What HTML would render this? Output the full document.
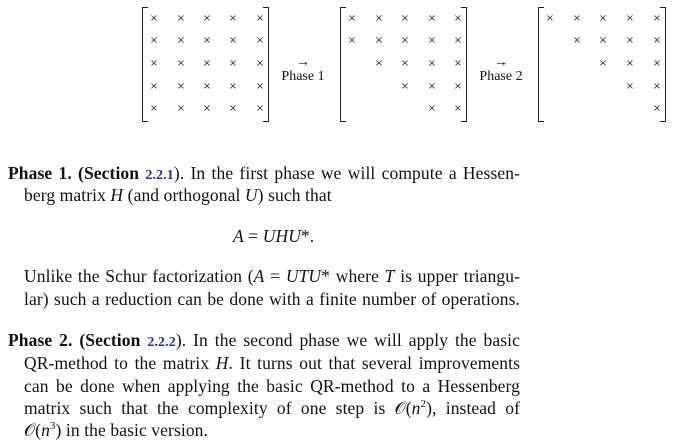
<!DOCTYPE html>
<html><head><meta charset="utf-8"><style>
body{margin:0;width:676px;height:445px;background:#fff;position:relative;overflow:hidden;font-family:"Liberation Serif",serif;color:#111}
.l{position:absolute;font-size:17.5px;line-height:20px;white-space:nowrap;letter-spacing:0.1px}
.j{text-align:justify;text-align-last:justify}
.x{position:absolute;font-family:"DejaVu Sans",sans-serif;font-size:10px;line-height:12px;width:12px;text-align:center;color:#333}
.bl,.br{position:absolute;top:7px;height:113px;width:5px;border:1.5px solid #222}
.bl{border-right:none}.br{border-left:none}
.ph{position:absolute;font-size:14px;line-height:14px;text-align:center;width:56px}
.c{color:#2a2a9a;font-size:14px;font-weight:bold}
i{font-style:italic}
sup{font-size:11px;line-height:0;vertical-align:7px}
</style></head><body>
<div class="bl" style="left:142px"></div><div class="br" style="left:263px"></div>
<div class="bl" style="left:340px"></div><div class="br" style="left:461px"></div>
<div class="bl" style="left:538px"></div><div class="br" style="left:660px"></div>
<div class="ph" style="left:275px;top:56px">→<br>Phase 1</div>
<div class="ph" style="left:473px;top:56px">→<br>Phase 2</div>
<div id="m"></div>
<script>
var xs=[[154,181,207,233,260],[352,379,405,432,458],[550,577,603,630,657]];
var ys=[19,41,64,87,109];var h='';
for(var m=0;m<3;m++)for(var r=0;r<5;r++)for(var c=0;c<5;c++){
var show=m==0||(m==1&&c>=r-1)||(m==2&&c>=r);
if(show)h+='<div class="x" style="left:'+(xs[m][c]-6)+'px;top:'+(ys[r]-6)+'px">×</div>';}
document.getElementById('m').innerHTML=h;
</script>
<div class="l j" style="left:8px;width:512px;top:163px"><b>Phase 1. (Section <span class="c">2.2.1</span></b>). In the first phase we will compute a Hessen-</div>
<div class="l" style="left:24px;top:185px">berg matrix <i>H</i> (and orthogonal <i>U</i>) such that</div>
<div class="l" style="left:233px;top:226px"><i>A</i> = <i>UHU</i>*.</div>
<div class="l j" style="left:24px;width:496px;top:266px">Unlike the Schur factorization (<i>A</i> = <i>UTU</i>* where <i>T</i> is upper triangu-</div>
<div class="l j" style="left:24px;width:496px;top:289px">lar) such a reduction can be done with a finite number of operations.</div>
<div class="l j" style="left:8px;width:512px;top:330px"><b>Phase 2. (Section <span class="c">2.2.2</span></b>). In the second phase we will apply the basic</div>
<div class="l j" style="left:24px;width:496px;top:353px">QR-method to the matrix <i>H</i>. It turns out that several improvements</div>
<div class="l j" style="left:24px;width:496px;top:376px">can be done when applying the basic QR-method to a Hessenberg</div>
<div class="l j" style="left:24px;width:496px;top:398px">matrix such that the complexity of one step is 𝒪(<i>n</i><sup>2</sup>), instead of</div>
<div class="l" style="left:24px;top:420px">𝒪(<i>n</i><sup>3</sup>) in the basic version.</div>
</body></html>
